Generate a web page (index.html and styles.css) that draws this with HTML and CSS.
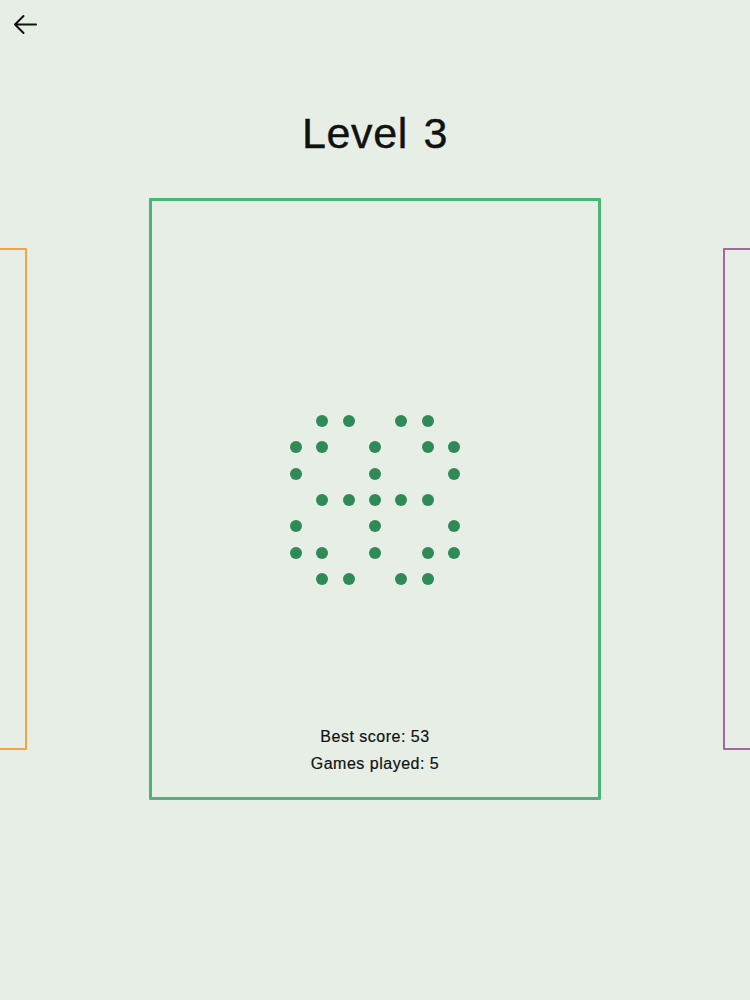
FILE: index.html
```html
<!DOCTYPE html>
<html>
<head>
<meta charset="utf-8">
<link rel="stylesheet" href="styles.css">
</head>
<body>
<div class="page">
  <div class="topbar">
    <button class="back" aria-label="Back">
      <svg width="26" height="26" viewBox="0 0 26 26"><path d="M24 12.5H3M11.5 4L3 12.5L11.5 21" fill="none" stroke="#111" stroke-width="2" stroke-linecap="round" stroke-linejoin="round"/></svg>
    </button>
  </div>
  <h1 class="title">Level 3</h1>
  <div class="carousel">
    <div class="card side orange"></div>
    <div class="card main">
      <div class="spacer"></div>
      <div class="dots">
        <i class="e"></i><i></i><i></i><i class="e"></i><i></i><i></i><i class="e"></i>
        <i></i><i></i><i class="e"></i><i></i><i class="e"></i><i></i><i></i>
        <i></i><i class="e"></i><i class="e"></i><i></i><i class="e"></i><i class="e"></i><i></i>
        <i class="e"></i><i></i><i></i><i></i><i></i><i></i><i class="e"></i>
        <i></i><i class="e"></i><i class="e"></i><i></i><i class="e"></i><i class="e"></i><i></i>
        <i></i><i></i><i class="e"></i><i></i><i class="e"></i><i></i><i></i>
        <i class="e"></i><i></i><i></i><i class="e"></i><i></i><i></i><i class="e"></i>
      </div>
      <div class="stats">
        <div>Best score: 53</div>
        <div>Games played: 5</div>
      </div>
    </div>
    <div class="card side purple"></div>
  </div>
</div>
</body>
</html>
```
FILE: styles.css
```css
html, body {
  margin: 0;
  padding: 0;
  background: #e6eee6;
}
.page {
  width: 750px;
  height: 1000px;
  overflow: hidden;
  font-family: "Liberation Sans", Arial, sans-serif;
  color: #111;
}
.topbar {
  height: 50px;
  padding: 12px 0 0 12px;
  box-sizing: border-box;
}
.back {
  border: 0;
  background: none;
  padding: 0;
  width: 26px;
  height: 26px;
  display: block;
}
.back svg { display: block; }
.title {
  margin: 57px 0 0;
  font-size: 43px;
  line-height: 52px;
  font-weight: 400;
  text-align: center;
  letter-spacing: 0.6px;
  word-spacing: 3px;
  -webkit-text-stroke: 0.4px #111;
}
.carousel {
  margin-top: 39px;
  display: flex;
  justify-content: center;
  align-items: center;
  gap: 122px;
}
.card {
  flex: none;
  box-sizing: border-box;
  border-radius: 1px;
}
.side {
  width: 376px;
  height: 502px;
}
.orange { border: 2px solid #f4a349; }
.purple { border: 2px solid #a4689a; }
.main {
  width: 452px;
  height: 602px;
  border: 3px solid #48b676;
  display: grid;
  grid-template-rows: 1fr auto 1fr;
  justify-items: center;
}
.dots {
  display: grid;
  grid-template-columns: repeat(7, 12px);
  grid-auto-rows: 12px;
  gap: 14.3px;
  margin-top: 2px;
}
.dots i {
  display: block;
  width: 12px;
  height: 12px;
  border-radius: 50%;
  background: #2f8a56;
}
.dots i.e { background: transparent; }
.stats {
  align-self: end;
  padding-bottom: 20px;
  text-align: center;
  font-size: 16px;
  line-height: 27px;
  letter-spacing: 0.5px;
  color: #111;
  -webkit-text-stroke: 0.2px #111;
}
```
